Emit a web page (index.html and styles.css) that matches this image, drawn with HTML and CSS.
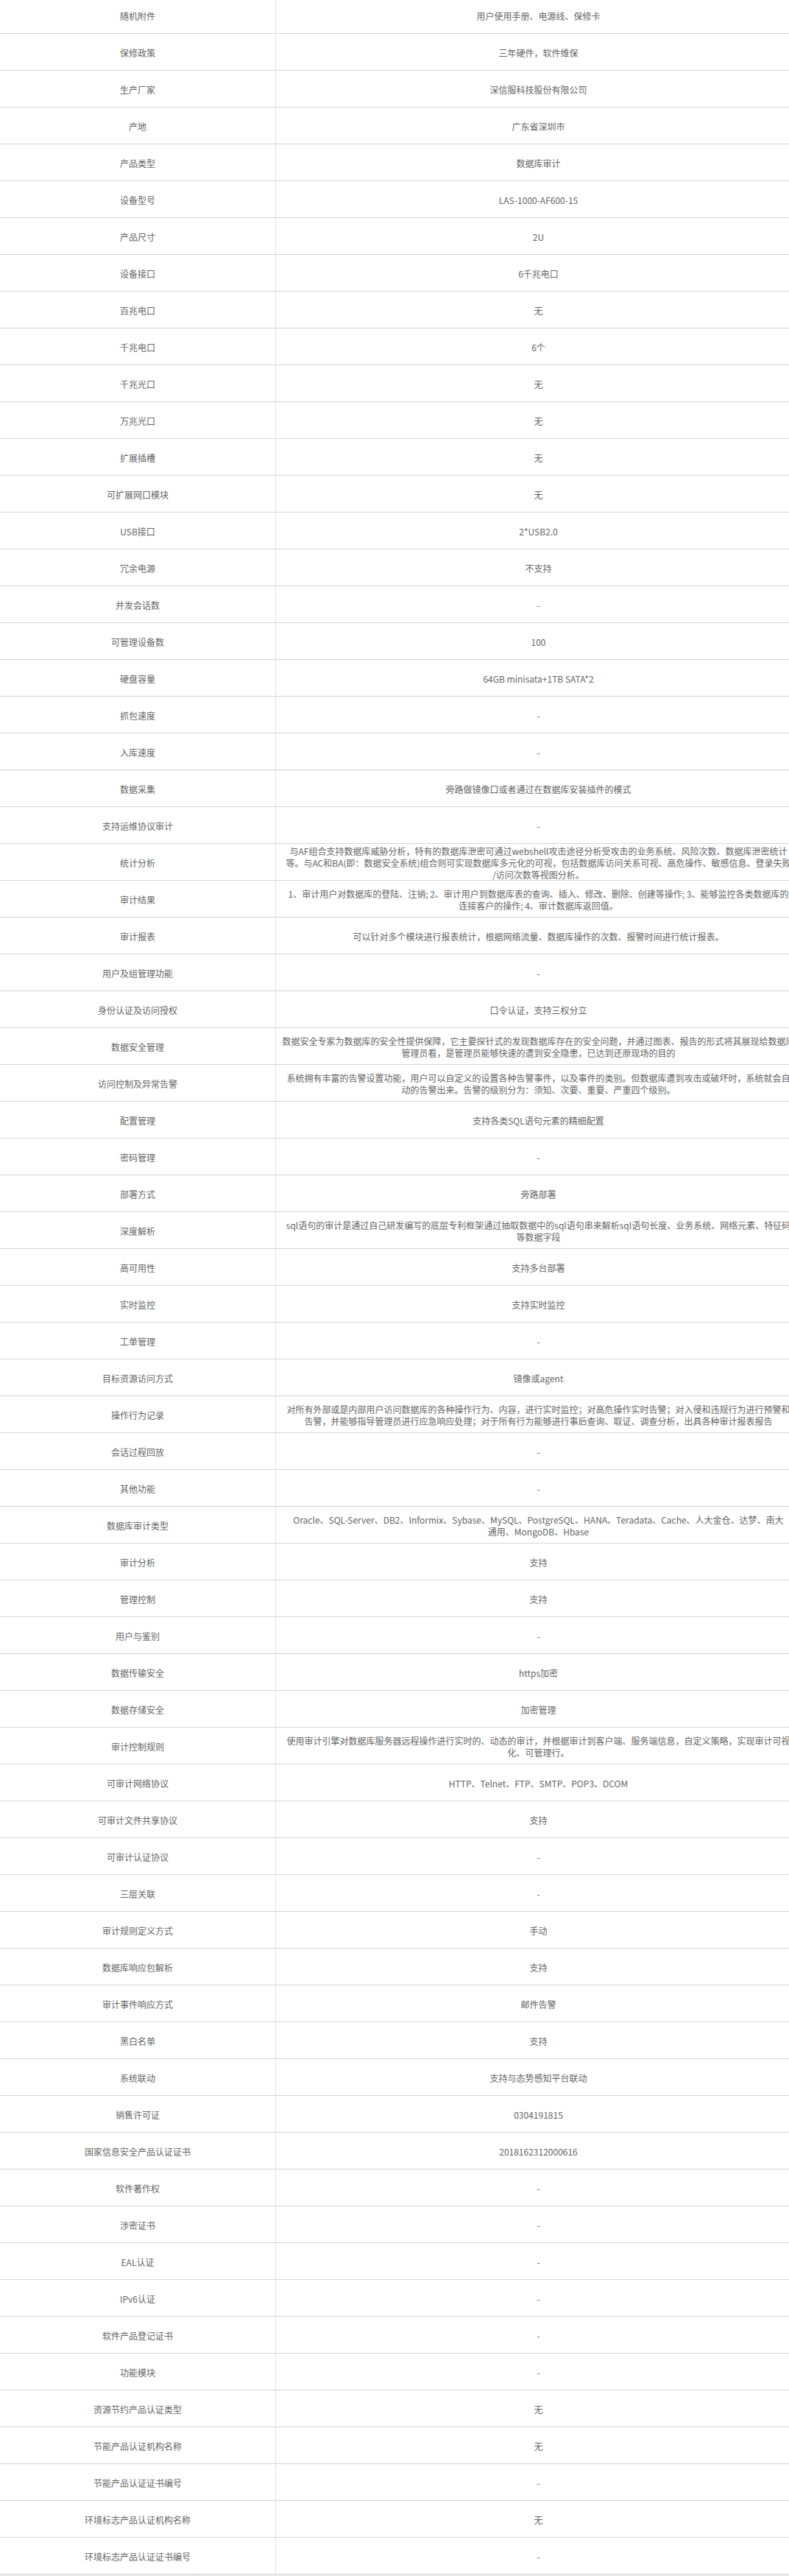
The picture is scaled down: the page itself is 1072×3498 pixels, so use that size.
FILE: index.html
```html
<!DOCTYPE html>
<html lang="zh-CN">
<head>
<meta charset="utf-8">
<title>参数</title>
<link rel="stylesheet" href="styles.css">
</head>
<body>
<div class="spec">
  <div class="row"><div class="label">随机附件</div><div class="val">用户使用手册、电源线、保修卡</div></div>
  <div class="row"><div class="label">保修政策</div><div class="val">三年硬件，软件维保</div></div>
  <div class="row"><div class="label">生产厂家</div><div class="val">深信服科技股份有限公司</div></div>
  <div class="row"><div class="label">产地</div><div class="val">广东省深圳市</div></div>
  <div class="row"><div class="label">产品类型</div><div class="val">数据库审计</div></div>
  <div class="row"><div class="label">设备型号</div><div class="val">LAS-1000-AF600-15</div></div>
  <div class="row"><div class="label">产品尺寸</div><div class="val">2U</div></div>
  <div class="row"><div class="label">设备接口</div><div class="val">6千兆电口</div></div>
  <div class="row"><div class="label">百兆电口</div><div class="val">无</div></div>
  <div class="row"><div class="label">千兆电口</div><div class="val">6个</div></div>
  <div class="row"><div class="label">千兆光口</div><div class="val">无</div></div>
  <div class="row"><div class="label">万兆光口</div><div class="val">无</div></div>
  <div class="row"><div class="label">扩展插槽</div><div class="val">无</div></div>
  <div class="row"><div class="label">可扩展网口模块</div><div class="val">无</div></div>
  <div class="row"><div class="label">USB接口</div><div class="val">2*USB2.0</div></div>
  <div class="row"><div class="label">冗余电源</div><div class="val">不支持</div></div>
  <div class="row"><div class="label">并发会话数</div><div class="val">-</div></div>
  <div class="row"><div class="label">可管理设备数</div><div class="val">100</div></div>
  <div class="row"><div class="label">硬盘容量</div><div class="val">64GB minisata+1TB SATA*2</div></div>
  <div class="row"><div class="label">抓包速度</div><div class="val">-</div></div>
  <div class="row"><div class="label">入库速度</div><div class="val">-</div></div>
  <div class="row"><div class="label">数据采集</div><div class="val">旁路做镜像口或者通过在数据库安装插件的模式</div></div>
  <div class="row"><div class="label">支持运维协议审计</div><div class="val">-</div></div>
  <div class="row"><div class="label">统计分析</div><div class="val">与AF组合支持数据库威胁分析，特有的数据库泄密可通过webshell攻击途径分析受攻击的业务系统、风险次数、数据库泄密统计<br>等。与AC和BA(即：数据安全系统)组合则可实现数据库多元化的可视，包括数据库访问关系可视、高危操作、敏感信息、登录失败<br>/访问次数等视图分析。</div></div>
  <div class="row"><div class="label">审计结果</div><div class="val">1、审计用户对数据库的登陆、注销; 2、审计用户到数据库表的查询、插入、修改、删除、创建等操作; 3、能够监控各类数据库的<br>连接客户的操作; 4、审计数据库返回值。</div></div>
  <div class="row"><div class="label">审计报表</div><div class="val">可以针对多个模块进行报表统计，根据网络流量、数据库操作的次数、报警时间进行统计报表。</div></div>
  <div class="row"><div class="label">用户及组管理功能</div><div class="val">-</div></div>
  <div class="row"><div class="label">身份认证及访问授权</div><div class="val">口令认证，支持三权分立</div></div>
  <div class="row"><div class="label">数据安全管理</div><div class="val">数据安全专家为数据库的安全性提供保障，它主要探针式的发现数据库存在的安全问题，并通过图表、报告的形式将其展现给数据库<br>管理员看，是管理员能够快速的遭到安全隐患，已达到还原现场的目的</div></div>
  <div class="row"><div class="label">访问控制及异常告警</div><div class="val">系统拥有丰富的告警设置功能，用户可以自定义的设置各种告警事件，以及事件的类别。但数据库遭到攻击或破坏时，系统就会自<br>动的告警出来。告警的级别分为：须知、次要、重要、严重四个级别。</div></div>
  <div class="row"><div class="label">配置管理</div><div class="val">支持各类SQL语句元素的精细配置</div></div>
  <div class="row"><div class="label">密码管理</div><div class="val">-</div></div>
  <div class="row"><div class="label">部署方式</div><div class="val">旁路部署</div></div>
  <div class="row"><div class="label">深度解析</div><div class="val">sql语句的审计是通过自己研发编写的底层专利框架通过抽取数据中的sql语句串来解析sql语句长度、业务系统、网络元素、特征码<br>等数据字段</div></div>
  <div class="row"><div class="label">高可用性</div><div class="val">支持多台部署</div></div>
  <div class="row"><div class="label">实时监控</div><div class="val">支持实时监控</div></div>
  <div class="row"><div class="label">工单管理</div><div class="val">-</div></div>
  <div class="row"><div class="label">目标资源访问方式</div><div class="val">镜像或agent</div></div>
  <div class="row"><div class="label">操作行为记录</div><div class="val">对所有外部或是内部用户访问数据库的各种操作行为、内容，进行实时监控；对高危操作实时告警；对入侵和违规行为进行预警和<br>告警，并能够指导管理员进行应急响应处理；对于所有行为能够进行事后查询、取证、调查分析，出具各种审计报表报告</div></div>
  <div class="row"><div class="label">会话过程回放</div><div class="val">-</div></div>
  <div class="row"><div class="label">其他功能</div><div class="val">-</div></div>
  <div class="row"><div class="label">数据库审计类型</div><div class="val">Oracle、SQL-Server、DB2、Informix、Sybase、MySQL、PostgreSQL、HANA、Teradata、Cache、人大金仓、达梦、南大<br>通用、MongoDB、Hbase</div></div>
  <div class="row"><div class="label">审计分析</div><div class="val">支持</div></div>
  <div class="row"><div class="label">管理控制</div><div class="val">支持</div></div>
  <div class="row"><div class="label">用户与鉴别</div><div class="val">-</div></div>
  <div class="row"><div class="label">数据传输安全</div><div class="val">https加密</div></div>
  <div class="row"><div class="label">数据存储安全</div><div class="val">加密管理</div></div>
  <div class="row"><div class="label">审计控制规则</div><div class="val">使用审计引擎对数据库服务器远程操作进行实时的、动态的审计，并根据审计到客户端、服务端信息，自定义策略，实现审计可视<br>化、可管理行。</div></div>
  <div class="row"><div class="label">可审计网络协议</div><div class="val">HTTP、Telnet、FTP、SMTP、POP3、DCOM</div></div>
  <div class="row"><div class="label">可审计文件共享协议</div><div class="val">支持</div></div>
  <div class="row"><div class="label">可审计认证协议</div><div class="val">-</div></div>
  <div class="row"><div class="label">三层关联</div><div class="val">-</div></div>
  <div class="row"><div class="label">审计规则定义方式</div><div class="val">手动</div></div>
  <div class="row"><div class="label">数据库响应包解析</div><div class="val">支持</div></div>
  <div class="row"><div class="label">审计事件响应方式</div><div class="val">邮件告警</div></div>
  <div class="row"><div class="label">黑白名单</div><div class="val">支持</div></div>
  <div class="row"><div class="label">系统联动</div><div class="val">支持与态势感知平台联动</div></div>
  <div class="row"><div class="label">销售许可证</div><div class="val">0304191815</div></div>
  <div class="row"><div class="label">国家信息安全产品认证证书</div><div class="val">2018162312000616</div></div>
  <div class="row"><div class="label">软件著作权</div><div class="val">-</div></div>
  <div class="row"><div class="label">涉密证书</div><div class="val">-</div></div>
  <div class="row"><div class="label">EAL认证</div><div class="val">-</div></div>
  <div class="row"><div class="label">IPv6认证</div><div class="val">-</div></div>
  <div class="row"><div class="label">软件产品登记证书</div><div class="val">-</div></div>
  <div class="row"><div class="label">功能模块</div><div class="val">-</div></div>
  <div class="row"><div class="label">资源节约产品认证类型</div><div class="val">无</div></div>
  <div class="row"><div class="label">节能产品认证机构名称</div><div class="val">无</div></div>
  <div class="row"><div class="label">节能产品认证证书编号</div><div class="val">-</div></div>
  <div class="row"><div class="label">环境标志产品认证机构名称</div><div class="val">无</div></div>
  <div class="row"><div class="label">环境标志产品认证证书编号</div><div class="val">-</div></div>
  <div class="next-row"><div class="cell"></div><div class="cell"></div><div class="cell"></div></div>
</div>
</body>
</html>
```
FILE: styles.css
```css
html, body {
  margin: 0;
  padding: 0;
  overflow: hidden;
  background: #fff;
}

.spec {
  width: 1088px;
  margin-top: -4px;
  font-family: "Noto Sans CJK SC", "Microsoft YaHei", sans-serif;
  font-size: 12px;
  line-height: 16px;
  color: #666;
}

.row {
  display: grid;
  grid-template-columns: 375px 1fr;
  height: 50px;
  box-sizing: border-box;
  border-bottom: 1px solid #d6d6d6;
}

.label {
  display: flex;
  align-items: center;
  justify-content: center;
  border-right: 1px solid #e2e2e2;
  padding-top: 2px;
  white-space: nowrap;
}

.val {
  display: flex;
  flex-direction: column;
  align-items: center;
  justify-content: center;
  text-align: center;
  white-space: nowrap;
  padding-top: 2px;
}

.next-row {
  display: grid;
  grid-template-columns: 267px 538px 1fr;
  height: 30px;
  background: #eeeeee;
}

.next-row .cell {
  border-right: 1px solid #d6d6d6;
}
```
